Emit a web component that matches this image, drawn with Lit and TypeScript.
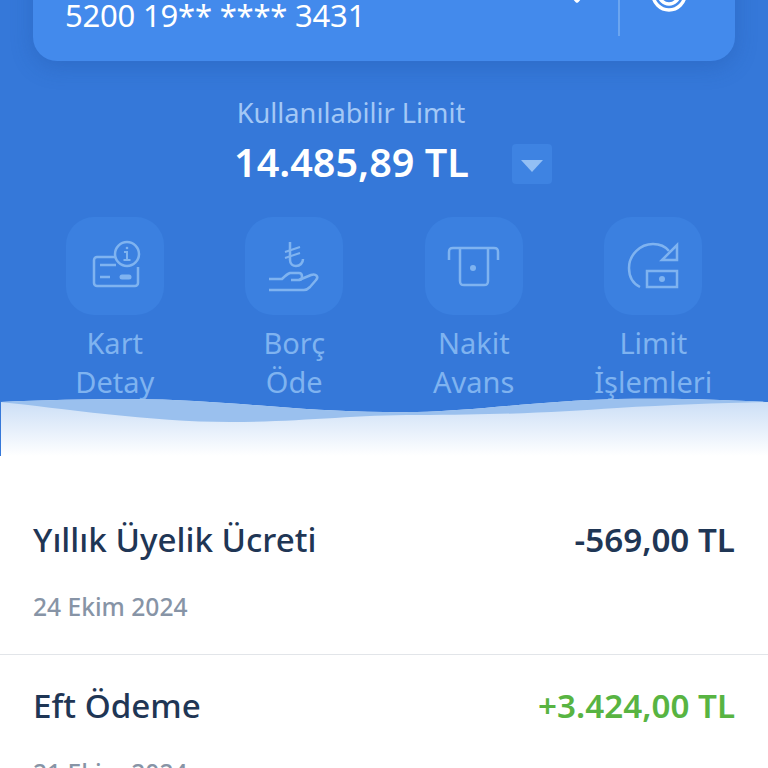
import { LitElement, html, css, svg } from 'lit';
import { customElement } from 'lit/decorators.js';

const infoCard = svg`
  <path d="M50 40H31a3 3 0 0 0-3 3v23a3 3 0 0 0 3 3h38a3 3 0 0 0 3-3V50" />
  <path d="M34 48h16M34 60h10" />
  <path d="M56 60h7" stroke-width="5" stroke-linecap="round" />
  <circle cx="61" cy="37" r="12" />
  <path d="M58 35h3v8M57.500 43h7" stroke-width="2" />
  <circle cx="61" cy="31" r="1.300" fill="currentColor" stroke="none" />
`;

const payDebt = svg`
  <path d="M45 25v18c0 4 3 6 6 6 4 0 7-3 7-7" />
  <path d="M40 35l15-5M40 41l15-5" stroke-width="2" />
  <path d="M24 62h13c3-3 5-5 8-6h9c4 0 4 7 0 7h-8" />
  <path d="M54 63l12-5c5-2 8 2 5 5l-6 7c-2 2-3 3-6 3H24" />
`;

const cashAdvance = svg`
  <path d="M24 43v-8c0-3 1-4 4-4h41c3 0 4 1 4 4v8" />
  <path d="M35 31v33c0 3 1 4 4 4h20c3 0 4-1 4-4V31" />
  <circle cx="48" cy="51" r="3" fill="currentColor" stroke="none" />
`;

const limitOps = svg`
  <path d="M36 70C28 66 25 58 25 51c0-13 11-24 24-24 7 0 12 2 16 7" />
  <path d="M73 28v15H58z" />
  <rect x="43" y="54" width="30" height="16" />
  <circle cx="58" cy="62" r="3" fill="currentColor" stroke="none" />
`;

@customElement('app-root')
export class AppRoot extends LitElement {
  static styles = css`
    :host {
      display: block;
      height: 768px;
      overflow: hidden;
      background: #fff;
      font-family: "Noto Sans", "Open Sans", sans-serif;
    }

    .hero {
      position: relative;
      height: 456px;
      padding-top: 1px;
      box-sizing: border-box;
      background: #3578d9;
    }

    .card {
      display: flex;
      align-items: flex-end;
      justify-content: space-between;
      height: 101px;
      margin: -41px 33px 0;
      padding: 0 33px 0 32px;
      box-sizing: border-box;
      border-radius: 0 0 24px 24px;
      background: #438aec;
      box-shadow: 0 6px 22px rgba(30, 80, 160, 0.3);
      color: #fff;
    }

    .pan {
      padding-bottom: 24px;
      font-size: 31px;
      line-height: 44px;
      letter-spacing: -0.2px;
    }

    .card-tools {
      display: block;
      margin-right: -33px;
    }

    .limit {
      display: flex;
      flex-direction: column;
      align-items: flex-start;
      width: 318px;
      margin: 33px auto 0;
      padding-left: 18px;
    }

    .limit-label {
      width: 234px;
      color: #a3c8f6;
      font-size: 27.200px;
      line-height: 38px;
      text-align: center;
      white-space: nowrap;
    }

    .limit-row {
      display: flex;
      align-items: flex-start;
      gap: 43px;
      margin-top: 9px;
    }

    .limit-value {
      color: #fff;
      font-size: 39.600px;
      font-weight: 600;
      line-height: 42px;
      white-space: nowrap;
    }

    .toggle {
      display: flex;
      align-items: center;
      justify-content: center;
      width: 40px;
      height: 40px;
      margin-top: 3px;
      border-radius: 4px;
      background: #3e83e2;
    }

    .toggle i {
      width: 0;
      height: 0;
      margin-top: 3px;
      border-left: 11px solid transparent;
      border-right: 11px solid transparent;
      border-top: 12px solid #93bff4;
    }

    .actions {
      display: grid;
      grid-template-columns: repeat(4, 1fr);
      margin: 33px 25px 0;
    }

    .action {
      display: flex;
      flex-direction: column;
      align-items: center;
      color: #7fb3f0;
    }

    .tile {
      width: 98px;
      height: 98px;
      border-radius: 28px;
      background: #3b80e0;
    }

    .tile svg {
      display: block;
      fill: none;
      stroke: currentColor;
      stroke-width: 2.500;
    }

    .action span {
      width: 120px;
      margin-top: 8px;
      font-size: 29px;
      line-height: 39px;
      text-align: center;
    }

    .wave {
      position: absolute;
      left: 0;
      bottom: 0;
      display: block;
    }

    .row {
      padding: 0 33px;
    }

    .row + .row {
      border-top: 1px solid #e2e5e9;
    }

    .row-main {
      display: flex;
      justify-content: space-between;
      padding-top: 62px;
      color: #1f3655;
      font-size: 33.200px;
      font-weight: 500;
      line-height: 44px;
    }

    .row + .row .row-main {
      padding-top: 29px;
    }

    .amount {
      font-weight: 600;
    }

    .amount.plus {
      color: #58b442;
    }

    .row-date {
      padding: 27px 0 29px;
      color: #8794a6;
      font-size: 24.600px;
      font-weight: 500;
      line-height: 36px;
    }
  `;

  render() {
    const actions = [
      { icon: infoCard, label: 'Kart Detay' },
      { icon: payDebt, label: 'Borç Öde' },
      { icon: cashAdvance, label: 'Nakit Avans' },
      { icon: limitOps, label: 'Limit İşlemleri' },
    ];

    return html`
      <section class="hero">
        <div class="card">
          <div class="pan">5200 19** **** 3431</div>
          <svg class="card-tools" width="190" height="77" viewBox="0 0 190 77" fill="none" stroke="#fff" stroke-width="3.500">
            <path d="M22 6l10 11 10-11" stroke-linecap="round" stroke-linejoin="round" />
            <path d="M74 0v52" stroke="#79aef2" stroke-width="1.500" />
            <circle cx="124" cy="10" r="16" />
            <circle cx="124" cy="10" r="10" />
          </svg>
        </div>

        <div class="limit">
          <div class="limit-label">Kullanılabilir Limit</div>
          <div class="limit-row">
            <div class="limit-value">14.485,89 TL</div>
            <div class="toggle"><i></i></div>
          </div>
        </div>

        <div class="actions">
          ${actions.map(
            (a) => html`
              <div class="action">
                <div class="tile">
                  <svg width="98" height="98" viewBox="0 0 98 98">${a.icon}</svg>
                </div>
                <span>${a.label}</span>
              </div>
            `,
          )}
        </div>

        <svg class="wave" width="768" height="58" viewBox="0 0 768 58">
          <defs>
            <linearGradient id="fade" x1="0" y1="0" x2="0" y2="1">
              <stop offset="0" stop-color="#c9ddf6" />
              <stop offset="1" stop-color="#ffffff" />
            </linearGradient>
          </defs>
          <path d="M1 4C40 2 90 1 130 1C220 1 300 14 384 14C400 14.500 410 14 417 14C470 13 540 3 617 1C680 0 730 2 768 4V58H1Z" fill="url(#fade)" />
          <path d="M0 4C40 2 90 1 130 1C220 1 300 14 384 14C400 14.500 410 14 417 14C470 13 540 3 617 1C680 0 730 2 768 4C720 5 670 7 617 10C560 14 500 17 417 17C350 17 300 24 230 24C150 24 60 10 0 4Z" fill="#9ac0ee" />
        </svg>
      </section>

      <section class="row">
        <div class="row-main">
          <span>Yıllık Üyelik Ücreti</span>
          <span class="amount">-569,00 TL</span>
        </div>
        <div class="row-date">24 Ekim 2024</div>
      </section>
      <section class="row">
        <div class="row-main">
          <span>Eft Ödeme</span>
          <span class="amount plus">+3.424,00 TL</span>
        </div>
        <div class="row-date">21 Ekim 2024</div>
      </section>
    `;
  }
}
